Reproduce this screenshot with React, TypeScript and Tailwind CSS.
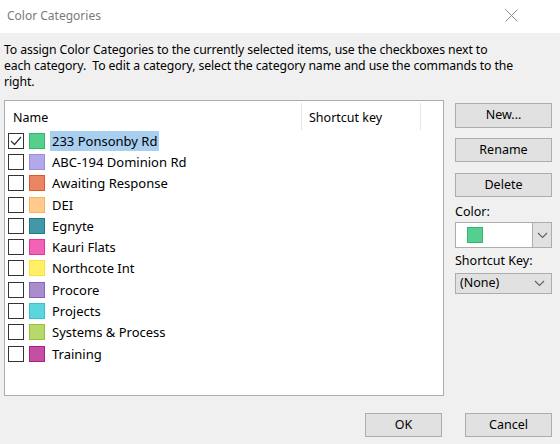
import React from 'react';

type Category = { name: string; fill: string; border: string; checked?: boolean };

const categories: Category[] = [
    { name: '233 Ponsonby Rd', fill: '#55cf8d', border: '#33b56e', checked: true },
    { name: 'ABC-194 Dominion Rd', fill: '#b3a9ea', border: '#9a8ee0' },
    { name: 'Awaiting Response', fill: '#ea8463', border: '#e0592b' },
    { name: 'DEI', fill: '#ffca8c', border: '#f9b25a' },
    { name: 'Egnyte', fill: '#4398a8', border: '#20788a' },
    { name: 'Kauri Flats', fill: '#f262b7', border: '#e2369b' },
    { name: 'Northcote Int', fill: '#fff067', border: '#ffe036' },
    { name: 'Procore', fill: '#a98ecd', border: '#8863bb' },
    { name: 'Projects', fill: '#5ad6dc', border: '#36c3c9' },
    { name: 'Systems & Process', fill: '#b7d96c', border: '#95c23b' },
    { name: 'Training', fill: '#c54fa1', border: '#a8237e' },
];

const Chevron = () => (
    <svg width="11" height="7" viewBox="0 0 11 7" fill="none">
        <path d="M1 1l4.5 4.5L10 1" stroke="#606060" strokeWidth="1.1" />
    </svg>
);

function Button({ label, className }: { label: string; className: string }) {
    return (
        <div className={`flex items-center justify-center bg-[#e1e1e1] border border-[#adadad] text-[12.5px] text-black ${className}`}>
            {label}
        </div>
    );
}

export default function App() {
    return (
        <div className="w-[560px] h-[444px] bg-[#f0f0f0] flex flex-col overflow-hidden" style={{ fontFamily: '"Noto Sans", "Open Sans", sans-serif' }}>
            {/* title bar */}
            <div className="h-[33px] bg-white flex items-center justify-between shrink-0 pb-[2px]">
                <span className="pl-[7px] text-[12px] text-[#7a7a7a]">Color Categories</span>
                <svg width="13" height="13" viewBox="0 0 13 13" className="mr-[42px]">
                    <path d="M0.5 0.5l12 12M12.5 0.5l-12 12" stroke="#8a8a8a" strokeWidth="1" />
                </svg>
            </div>

            <p className="pl-[4px] pt-[9px] text-[12.25px] leading-[16px] text-black tracking-[-0.1px] whitespace-nowrap">
                To assign Color Categories to the currently selected items, use the checkboxes next to<br />
                each category.&nbsp; To edit a category, select the category name and use the commands to the<br />
                right.
            </p>

            <div className="flex mt-[10px] pl-[4px]">
                {/* list */}
                <div className="w-[440px] h-[296px] bg-white border border-[#abadb3] flex flex-col">
                    <div className="h-[29px] flex items-stretch text-[12.5px] text-black">
                        <div className="w-[297px] pt-[6px] leading-[17px] pl-[8px] border-r border-[#e5e5e5] mt-[2px]">Name</div>
                        <div className="w-[119px] pt-[6px] leading-[17px] pl-[7px] border-r border-[#e5e5e5] mt-[2px]">Shortcut key</div>
                    </div>
                    <div className="flex flex-col">
                        {categories.map((c) => (
                            <div key={c.name} className="h-[21.3px] flex items-center pl-[3px] text-[13px] text-black">
                                <div className="w-[16px] h-[16px] border border-[#333333] bg-white flex items-center justify-center">
                                    {c.checked && (
                                        <svg width="12" height="10" viewBox="0 0 12 10" fill="none">
                                            <path d="M1 5l3.5 3.5L11 1" stroke="#333" strokeWidth="1.2" />
                                        </svg>
                                    )}
                                </div>
                                <div
                                    className="w-[16px] h-[16px] ml-[5px] border"
                                    style={{ backgroundColor: c.fill, borderColor: c.border }}
                                />
                                <span className={`ml-[5px] px-[2px] leading-[20px] ${c.checked ? 'bg-[#a8cff0]' : ''}`}>{c.name}</span>
                            </div>
                        ))}
                    </div>
                </div>

                {/* right column */}
                <div className="ml-[11px] w-[97px] flex flex-col">
                    <Button label="New..." className="h-[25px] mt-[3px]" />
                    <Button label="Rename" className="h-[24px] mt-[10px]" />
                    <Button label="Delete" className="h-[24px] mt-[11px]" />
                    <div className="text-[12.5px] text-black mt-[6px] leading-[17px]">Color:</div>
                    <div className="h-[26px] mt-[2px] bg-white border border-[#adadad] flex items-stretch">
                        <div className="flex-1 flex items-center pl-[11px]">
                            <div className="w-[16px] h-[16px] bg-[#55cf8d] border border-[#33b56e]" />
                        </div>
                        <div className="w-[19px] bg-[#e1e1e1] border-l border-[#adadad] flex items-center justify-center">
                            <Chevron />
                        </div>
                    </div>
                    <div className="text-[12.5px] text-black mt-[4px] leading-[18px]">Shortcut Key:</div>
                    <div className="h-[21px] mt-[3px] bg-[#e1e1e1] border border-[#adadad] flex items-center justify-between pl-[4px] pr-[6px] text-[12.5px] text-black">
                        <span>(None)</span>
                        <Chevron />
                    </div>
                </div>
            </div>

            <div className="flex justify-end mt-[17px] pr-[8px] gap-[23px]">
                <Button label="OK" className="w-[77px] h-[24px]" />
                <Button label="Cancel" className="w-[87px] h-[24px]" />
            </div>
        </div>
    );
}
